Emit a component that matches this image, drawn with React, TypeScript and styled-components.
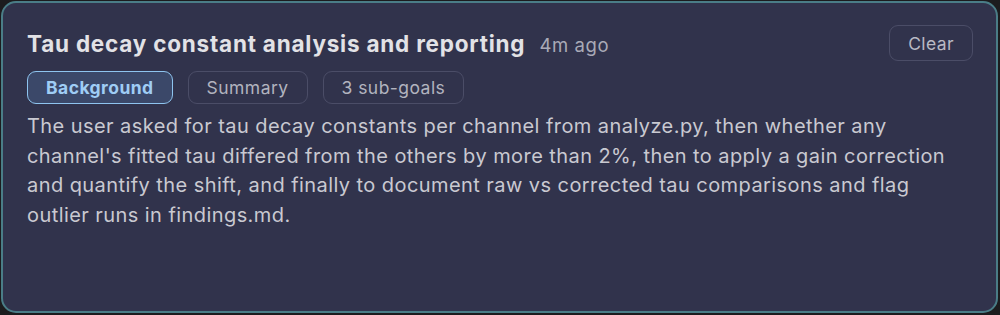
import React from "react";
import styled, { createGlobalStyle } from "styled-components";

const Global = createGlobalStyle`
  html, body { margin: 0; padding: 0; background: #1c1c1e; }
  body { font-family: Inter, "Noto Sans", sans-serif; -webkit-font-smoothing: antialiased; }
`;

const Card = styled.div`
  box-sizing: border-box;
  margin: 1px 2px 0 1px;
  height: 312px;
  border: 2px solid #4a7d87;
  border-radius: 15px;
  background: #31334c;
  padding: 21px 24px 0 24px;
`;

const Header = styled.div`
  display: flex;
  align-items: center;
  justify-content: space-between;
  height: 38px;
`;

const TitleGroup = styled.div`
  display: flex;
  align-items: baseline;
  gap: 14px;
`;

const Title = styled.h1`
  margin: 0;
  font-size: 22.5px;
  font-weight: 700;
  color: #e2e2e6;
  letter-spacing: 0.78px;
`;

const Time = styled.span`
  font-size: 18.5px;
  color: #a9aab7;
  letter-spacing: 0.6px;
`;

const ClearButton = styled.button`
  box-sizing: border-box;
  height: 36px;
  padding: 0 18px;
  margin-right: -1px;
  border: 1.5px solid #4b4d67;
  border-radius: 9px;
  background: transparent;
  color: #b9bac4;
  font-family: inherit;
  font-size: 17.5px;
  letter-spacing: 0.4px;
`;

const Tabs = styled.div`
  display: flex;
  gap: 15px;
  margin-top: 9px;
`;

const Tab = styled.button<{ $active?: boolean }>`
  box-sizing: border-box;
  height: 33px;
  padding: 0 18px;
  border-radius: 9px;
  font-family: inherit;
  font-size: 17.5px;
  letter-spacing: 0.45px;
  border: 1.5px solid ${(p) => (p.$active ? "#8ec4ef" : "#4b4d67")};
  background: ${(p) => (p.$active ? "#3b4869" : "transparent")};
  color: ${(p) => (p.$active ? "#9fcdf5" : "#b2b3bf")};
  font-weight: ${(p) => (p.$active ? 700 : 400)};
`;

const Body = styled.p`
  margin: 8px 0 0 0;
  font-size: 20px;
  line-height: 29.5px;
  letter-spacing: 0.43px;
  color: #c9c9d1;
`;

export default function App() {
  return (
    <>
      <Global />
      <Card>
        <Header>
          <TitleGroup>
            <Title>Tau decay constant analysis and reporting</Title>
            <Time>4m ago</Time>
          </TitleGroup>
          <ClearButton>Clear</ClearButton>
        </Header>
        <Tabs>
          <Tab $active>Background</Tab>
          <Tab>Summary</Tab>
          <Tab>3 sub-goals</Tab>
        </Tabs>
        <Body>
          The user asked for tau decay constants per channel from analyze.py, then whether any
          channel's fitted tau differed from the others by more than 2%, then to apply a gain
          correction and quantify the shift, and finally to document raw vs corrected tau
          comparisons and flag outlier runs in findings.md.
        </Body>
      </Card>
    </>
  );
}
